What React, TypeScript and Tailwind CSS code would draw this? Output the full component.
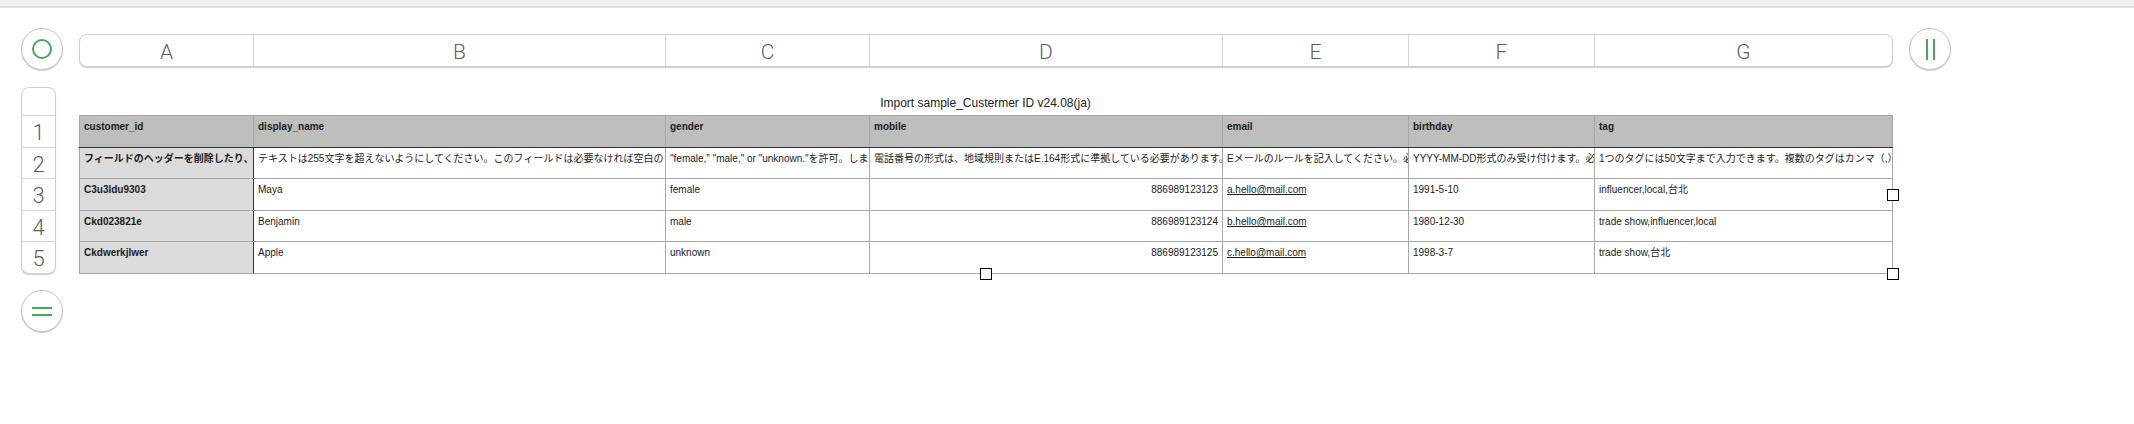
const columns = [
  { letter: "A", width: "w-[174px]", barWidth: "w-[173px]" },
  { letter: "B", width: "w-[412px]", barWidth: "w-[412px]" },
  { letter: "C", width: "w-[204px]", barWidth: "w-[204px]" },
  { letter: "D", width: "w-[353px]", barWidth: "w-[353px]" },
  { letter: "E", width: "w-[186px]", barWidth: "w-[186px]" },
  { letter: "F", width: "w-[186px]", barWidth: "w-[186px]" },
  { letter: "G", width: "w-[298px]", barWidth: "w-[298px]" },
];

const headers = ["customer_id", "display_name", "gender", "mobile", "email", "birthday", "tag"];

// these run past the cell edge in the sheet, only what shows is kept
const hints = [
  "フィールドのヘッダーを削除したり、",
  "テキストは255文字を超えないようにしてください。このフィールドは必要なければ空白のま",
  "\"female,\" \"male,\" or \"unknown.\"を許可。しま",
  "電話番号の形式は、地域規則またはE.164形式に準拠している必要があります。",
  "Eメールのルールを記入してください。必",
  "YYYY-MM-DD形式のみ受け付けます。必",
  "1つのタグには50文字まで入力できます。複数のタグはカンマ（,）",
];

const rows = [
  ["C3u3ldu9303", "Maya", "female", "886989123123", "a.hello@mail.com", "1991-5-10", "influencer,local,台北"],
  ["Ckd023821e", "Benjamin", "male", "886989123124", "b.hello@mail.com", "1980-12-30", "trade show,influencer,local"],
  ["Ckdwerkjlwer", "Apple", "unknown", "886989123125", "c.hello@mail.com", "1998-3-7", "trade show,台北"],
];

const rowHeights = ["h-[32px]", "h-[31px]", "h-[32px]", "h-[31px]", "h-[32px]"];

const cellBase = "border border-[#a8a8a8] pl-[4px] pr-[4px] pt-[4px] align-top overflow-hidden whitespace-nowrap";

const RoundButton = ({ children }: { children: React.ReactNode }) => (
  <div className="flex h-[42px] w-[42px] shrink-0 items-center justify-center rounded-full border border-[#c4c4c4] bg-white shadow-[0_1px_1px_rgba(0,0,0,0.2)]">
    {children}
  </div>
);

const Handle = ({ className }: { className: string }) => (
  <div className={`absolute h-[12px] w-[12px] border border-black bg-white ${className}`} />
);

export default function App() {
  return (
    <div className="h-[424px] w-[2134px] overflow-hidden bg-white font-['Liberation_Sans','Noto_Sans_CJK_JP',sans-serif] text-[10px] leading-[14px] text-[#1c1c1c]">
      <div className="h-[8px] border-b-2 border-[#e0e0e0] bg-[#f1f1f1]" />

      <div className="flex pl-[21px] pt-[20px]">
        {/* left rail */}
        <div className="flex w-[42px] shrink-0 flex-col">
          <RoundButton>
            <div className="h-[20px] w-[20px] rounded-full border-2 border-[#46a758]" />
          </RoundButton>

          <div className="mt-[17px] flex w-[35px] flex-col overflow-hidden rounded-[8px] border border-[#cfcfcf] bg-white shadow-[0_1px_1px_rgba(0,0,0,0.2)]">
            <div className="h-[27px]" />
            {rowHeights.map((h, i) => (
              <div
                key={i}
                className={`flex items-center justify-center border-t border-[#d4d4d4] pt-[3px] font-['Roboto',sans-serif] text-[22px] font-light text-[#5f5f5f] ${h}`}
              >
                {i + 1}
              </div>
            ))}
          </div>

          <div className="mt-[16px]">
            <RoundButton>
              <div className="flex w-[20px] flex-col gap-[5px]">
                <div className="h-[2px] bg-[#46a758]" />
                <div className="h-[2px] bg-[#46a758]" />
              </div>
            </RoundButton>
          </div>
        </div>

        {/* sheet */}
        <div className="ml-[16px] w-[1813px] shrink-0 pt-[6px]">
          <div className="-mr-[1px] flex h-[33px] overflow-hidden rounded-[8px] border border-[#d0d0d0] bg-white shadow-[0_1px_1px_rgba(0,0,0,0.2)]">
            {columns.map((c, i) => (
              <div
                key={c.letter}
                className={`flex items-center justify-center pt-[2px] font-['Roboto',sans-serif] text-[21px] font-light text-[#5f5f5f] ${c.barWidth} ${i > 0 ? "border-l border-[#d4d4d4]" : ""}`}
              >
                {c.letter}
              </div>
            ))}
          </div>

          <div className="mt-[29px] h-[19px] text-center text-[12px] leading-[15px] text-[#222222]">
            Import sample_Custermer ID v24.08(ja)
          </div>

          <div className="relative">
            <table className="w-[1813px] table-fixed border-collapse">
              <colgroup>
                {columns.map((c) => (
                  <col key={c.letter} className={c.width} />
                ))}
              </colgroup>
              <tbody>
                <tr className="h-[32px] bg-[#bdbfbd]">
                  {headers.map((h) => (
                    <td key={h} className={`${cellBase} border-b-[#333333] font-bold`}>
                      {h}
                    </td>
                  ))}
                </tr>
                <tr className="h-[31px]">
                  {hints.map((h, i) => (
                    <td
                      key={i}
                      className={`${cellBase} ${i === 0 ? "border-r-[#333333] bg-[#dbdbdb] font-bold" : ""}`}
                    >
                      {h}
                    </td>
                  ))}
                </tr>
                {rows.map((row, r) => (
                  <tr key={row[0]} className={rowHeights[r + 2]}>
                    {row.map((v, i) => (
                      <td
                        key={i}
                        className={`${cellBase} ${i === 0 ? "border-r-[#333333] bg-[#dbdbdb] font-bold" : ""} ${i === 3 ? "text-right" : ""} ${i === 4 ? "underline" : ""}`}
                      >
                        {v}
                      </td>
                    ))}
                  </tr>
                ))}
              </tbody>
            </table>
            <Handle className="-right-[7px] top-[74px]" />
            <Handle className="-right-[7px] -bottom-[6px]" />
            <Handle className="left-[901px] -bottom-[6px]" />
          </div>
        </div>

        <div className="ml-[17px]">
          <RoundButton>
            <div className="flex h-[21px] gap-[5px]">
              <div className="w-[2px] bg-[#46a758]" />
              <div className="w-[2px] bg-[#46a758]" />
            </div>
          </RoundButton>
        </div>
      </div>
    </div>
  );
}
